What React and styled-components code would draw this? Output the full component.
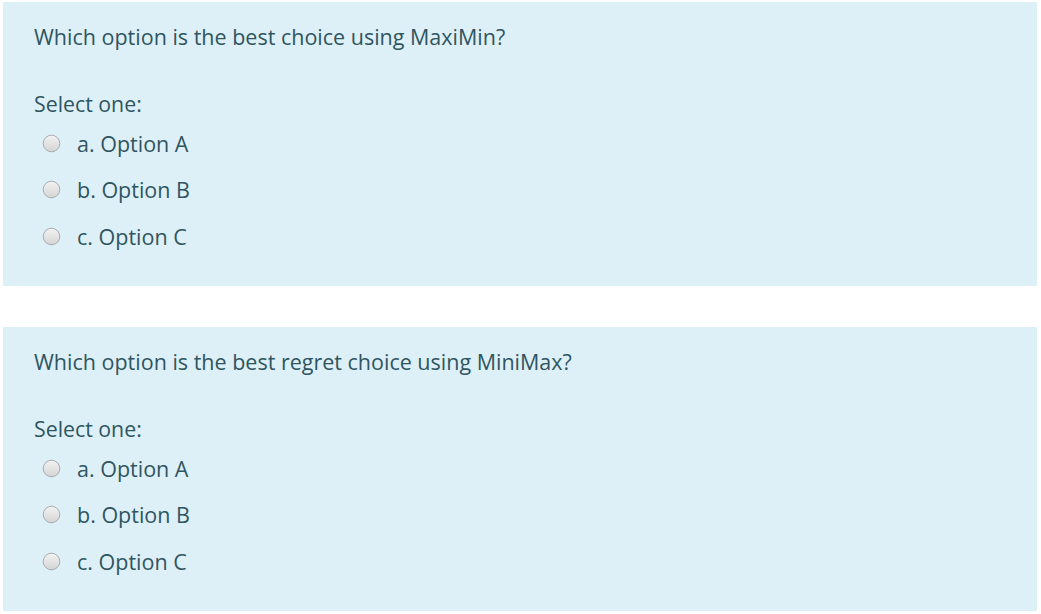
import React from "react";
import styled, { createGlobalStyle } from "styled-components";

const GlobalStyle = createGlobalStyle`
  body {
    margin: 0;
    background: #ffffff;
    font-family: "Open Sans", "Noto Sans", sans-serif;
  }
`;

const questions = [
  {
    text: "Which option is the best choice using MaxiMin?",
    options: ["a. Option A", "b. Option B", "c. Option C"],
  },
  {
    text: "Which option is the best regret choice using MiniMax?",
    options: ["a. Option A", "b. Option B", "c. Option C"],
  },
];

const Radio = () => (
  <RadioMark>
    <svg width="19" height="19" viewBox="0 0 19 19">
      <defs>
        <linearGradient id="rg" x1="0" y1="0" x2="0" y2="1">
          <stop offset="0" stopColor="#f3f3f3" />
          <stop offset="1" stopColor="#d4d4d4" />
        </linearGradient>
      </defs>
      <circle cx="9.5" cy="9.5" r="8.3" fill="url(#rg)" stroke="#a9abad" strokeWidth="1" />
    </svg>
  </RadioMark>
);

const Question = ({ text, options }) => {
  return (
    <Panel>
      <QuestionText>{text}</QuestionText>
      <Prompt>Select one:</Prompt>
      <Options>
        {options.map((o) => (
          <OptionRow key={o}>
            <Radio />
            <OptionLabel>{o}</OptionLabel>
          </OptionRow>
        ))}
      </Options>
    </Panel>
  );
};

const App = () => {
  return (
    <Page>
      <GlobalStyle />
      {questions.map((q) => (
        <Question key={q.text} text={q.text} options={q.options} />
      ))}
    </Page>
  );
};

export default App;

const Page = styled.div`
  display: flex;
  flex-direction: column;
  gap: 41px;
  padding: 2px 4px 0 3px;
`;

const Panel = styled.div`
  display: flex;
  flex-direction: column;
  height: 284px;
  box-sizing: border-box;
  padding: 20px 0 0 31px;
  background: #def0f7;
  color: #2f5561;
`;

const QuestionText = styled.div`
  font-size: 21.5px;
  line-height: 30px;
`;

const Prompt = styled.div`
  font-size: 21.3px;
  line-height: 30px;
  margin-top: 37px;
`;

const Options = styled.div`
  display: flex;
  flex-direction: column;
  margin-top: 1px;
`;

const OptionRow = styled.div`
  display: flex;
  align-items: center;
  height: 46.5px;
`;

const RadioMark = styled.span`
  display: inline-flex;
  margin-left: 8px;
  width: 19px;
  height: 19px;
`;

const OptionLabel = styled.span`
  margin-left: 16px;
  font-size: 21.5px;
`;
